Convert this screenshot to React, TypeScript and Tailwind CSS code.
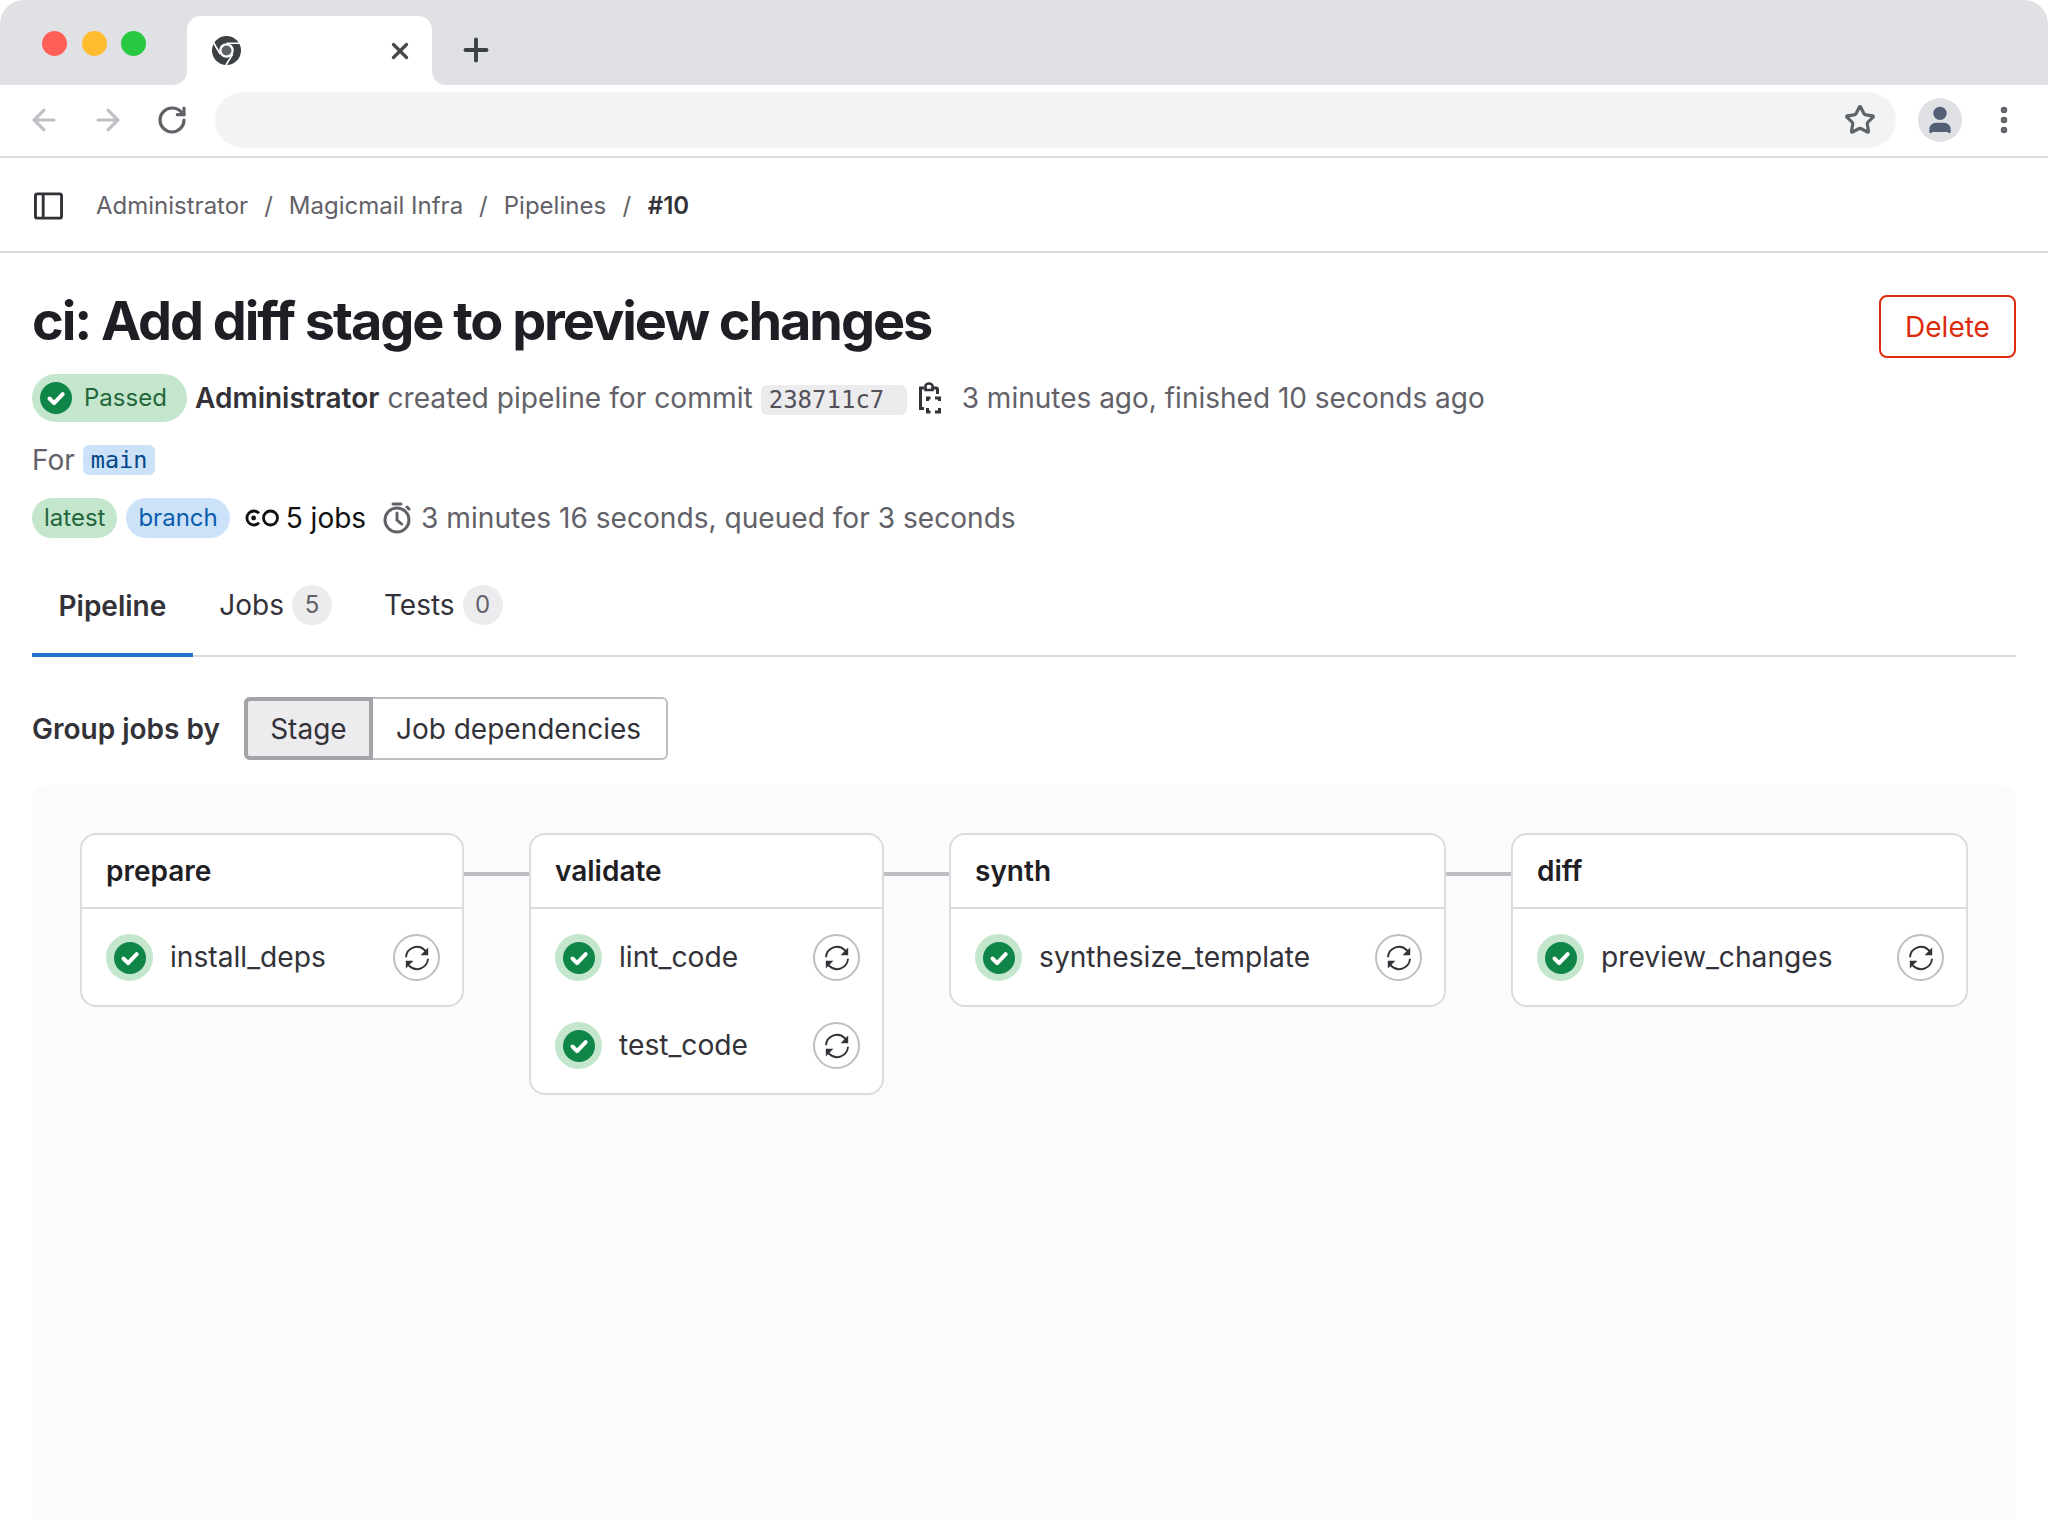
import { ArrowLeft, ArrowRight, MoreVertical, Plus, RotateCw, Star, User, X } from 'lucide-react';

const stages = [
  { name: 'prepare', width: 'w-[384px]', jobs: ['install_deps'] },
  { name: 'validate', width: 'w-[355px]', jobs: ['lint_code', 'test_code'] },
  { name: 'synth', width: 'w-[497px]', jobs: ['synthesize_template'] },
  { name: 'diff', width: 'w-[457px]', jobs: ['preview_changes'] },
];

const StatusCheck = ({ className }: { className: string }) => (
  <svg viewBox="0 0 32 32" className={className}>
    <circle cx="16" cy="16" r="16" fill="#108548" />
    <path d="M9.5 16.5l4.6 4.6 8.6-9" fill="none" stroke="#fff" strokeWidth="4" strokeLinecap="round" strokeLinejoin="round" />
  </svg>
);

const RetryIcon = () => (
  <svg viewBox="0 0 26 26" className="h-[26px] w-[26px]" fill="none" stroke="#333238" strokeWidth="1.9">
    <path d="M2 12.2A11 11 0 0 1 20.6 5l2 2.2" />
    <path d="M24 13.8A11 11 0 0 1 5.4 21l-2-2.2" />
    <path d="M24.2 2.6v7.6h-7.6z" fill="#333238" stroke="none" />
    <path d="M1.8 23.4v-7.6h7.6z" fill="#333238" stroke="none" />
  </svg>
);

const ChromeIcon = () => (
  <svg viewBox="0 0 28 28" className="h-[29px] w-[29px]">
    <circle cx="14" cy="14" r="14" fill="#3c4043" />
    <circle cx="14" cy="14" r="7" fill="#fff" />
    <circle cx="14" cy="14" r="4.8" fill="#5f6368" />
    <path d="M14 7h13M8 17.5L1.5 6.5M20 17.5L13.5 28" stroke="#fff" strokeWidth="1.6" />
  </svg>
);

const Job = ({ name }: { name: string }) => (
  <div className="flex h-[47px] items-center">
    <div className="flex h-[47px] w-[47px] shrink-0 items-center justify-center rounded-full bg-[#c3e6cd]">
      <StatusCheck className="h-[32px] w-[32px]" />
    </div>
    <span className="ml-[17px] flex-1 text-[28.2px] text-[#333238]">{name}</span>
    <div className="flex h-[47px] w-[47px] shrink-0 items-center justify-center rounded-full border-2 border-[#bfbfc3] bg-white">
      <RetryIcon />
    </div>
  </div>
);

export default function App() {
  return (
    <div className="flex h-[1520px] w-[2048px] flex-col overflow-hidden bg-white font-['Inter',sans-serif]">
      {/* Browser tab strip */}
      <div className="flex h-[85px] shrink-0 items-end rounded-t-[24px] bg-[#dfe1e5]">
        <div className="mb-[29px] ml-[42px] flex w-[104px] items-center justify-between self-end">
          <span className="h-[25px] w-[25px] rounded-full bg-[#ff5f57]" />
          <span className="h-[25px] w-[25px] rounded-full bg-[#febc2e]" />
          <span className="h-[25px] w-[25px] rounded-full bg-[#28c840]" />
        </div>
        <div className="relative ml-[41px] flex h-[69px] w-[245px] items-center justify-between rounded-t-[14px] bg-white pl-[25px] pr-[19px]">
          <ChromeIcon />
          <X className="h-[26px] w-[26px] text-[#45474b]" strokeWidth={3} />
          <div className="absolute -left-[14px] bottom-0 h-[14px] w-[14px] bg-white">
            <div className="h-full w-full rounded-br-[14px] bg-[#dfe1e5]" />
          </div>
          <div className="absolute -right-[14px] bottom-0 h-[14px] w-[14px] bg-white">
            <div className="h-full w-full rounded-bl-[14px] bg-[#dfe1e5]" />
          </div>
        </div>
        <Plus className="mb-[17px] ml-[26px] h-[36px] w-[36px] text-[#3c4043]" strokeWidth={2.6} />
      </div>

      {/* Browser toolbar */}
      <div className="flex h-[73px] shrink-0 items-center border-b-2 border-[#dcdcde] pb-[2px]">
        <ArrowLeft className="ml-[27px] h-[34px] w-[34px] text-[#bdc1c6]" strokeWidth={2.2} />
        <ArrowRight className="ml-[30px] h-[34px] w-[34px] text-[#bdc1c6]" strokeWidth={2.2} />
        <RotateCw className="ml-[31px] h-[32px] w-[32px] text-[#5f6368]" strokeWidth={2.4} />
        <div className="ml-[27px] flex h-[56px] w-[1681px] items-center justify-end rounded-full bg-[#f1f3f4] pr-[20px]">
          <Star className="h-[32px] w-[32px] text-[#5f6368]" strokeWidth={2.4} />
        </div>
        <div className="ml-[22px] flex h-[44px] w-[44px] items-center justify-center rounded-full bg-[#dfe1e5]">
          <User className="h-[32px] w-[32px] fill-[#535f75] text-[#535f75]" />
        </div>
        <MoreVertical className="ml-[25px] h-[34px] w-[34px] text-[#5f6368]" strokeWidth={2.6} />
      </div>

      {/* Breadcrumbs */}
      <div className="flex h-[95px] shrink-0 items-center border-b-2 border-[#dcdcde] pl-[34px] pt-[2px] text-[24px] text-[#626168]">
        <svg viewBox="0 0 30 28" className="h-[28px] w-[29px]" fill="none" stroke="#333238" strokeWidth="3">
          <rect x="1.5" y="1.5" width="27" height="25" rx="2" />
          <path d="M9.5 1.5v25" />
        </svg>
        <span className="ml-[33px]">Administrator</span>
        <span className="mx-[16px]">/</span>
        <span>Magicmail Infra</span>
        <span className="mx-[16px]">/</span>
        <span>Pipelines</span>
        <span className="mx-[16.5px]">/</span>
        <span className="font-semibold text-[#333238]">#10</span>
      </div>

      <div className="flex min-h-0 flex-1 flex-col px-[32px]">
        {/* Title */}
        <div className="flex h-[106px] shrink-0 items-start justify-between">
          <h1 className="mt-[34px] text-[54px] font-bold leading-[68px] tracking-[-2.05px] text-[#1f1e24]">
            ci: Add diff stage to preview changes
          </h1>
          <button className="mt-[42px] h-[63px] w-[137px] rounded-[8px] border-2 border-[#dd2b0e] text-[28px] text-[#dd2b0e]">
            Delete
          </button>
        </div>

        {/* Pipeline meta */}
        <div className="mt-[15px] flex h-[48px] shrink-0 items-center text-[28px] text-[#626168]">
          <span className="flex h-[48px] w-[155px] items-center rounded-full bg-[#c3e6cd] pl-[8px] text-[24px] text-[#24663b]">
            <StatusCheck className="h-[32px] w-[32px]" />
            <span className="ml-[12px]">Passed</span>
          </span>
          <span className="ml-[8px] font-semibold text-[#333238]">Administrator</span>
          <span className="ml-[8px] text-[28.2px]">created pipeline for commit</span>
          <code className="ml-[8px] mt-[3px] h-[30px] w-[146px] rounded-[6px] bg-[#ececef] pl-[8px] font-['DejaVu_Sans_Mono',monospace] text-[24px] leading-[30px] text-[#535158]">
            238711c7
          </code>
          <svg viewBox="0 0 24 32" className="ml-[11px] h-[32px] w-[24px]" fill="none" stroke="#333238" strokeWidth="3">
            <path d="M6 6H2.5v20.5H6" />
            <path d="M7.5 8V4a3.5 2.5 0 0 1 7 0v4z" strokeWidth="2.6" />
            <path d="M15 6h3a1.5 1.5 0 0 1 1.5 1.5V12" />
            <path d="M9.5 19v-3h3M17 16h4.5v3M21.5 26v4H17M12.5 30h-3v-4" />
          </svg>
          <span className="ml-[20px]">3 minutes ago, finished 10 seconds ago</span>
        </div>
        <div className="mt-[22px] flex h-[32px] shrink-0 items-center text-[28px] text-[#626168]">
          <span>For</span>
          <code className="ml-[8px] h-[30px] rounded-[6px] bg-[#cbe2f9] px-[8px] font-['DejaVu_Sans_Mono',monospace] text-[23.5px] leading-[30px] text-[#064787]">
            main
          </code>
        </div>
        <div className="mt-[22px] flex h-[40px] shrink-0 items-center text-[28px] text-[#626168]">
          <span className="rounded-full bg-[#c3e6cd] px-[12px] text-[24px] leading-[40px] text-[#24663b]">latest</span>
          <span className="ml-[9px] rounded-full bg-[#cbe2f9] px-[12px] text-[24px] leading-[40px] text-[#0b5cad]">branch</span>
          <svg viewBox="0 0 34 18" className="ml-[15px] h-[18px] w-[34px]" fill="none" stroke="#111" strokeWidth="2.8">
            <circle cx="25.5" cy="9" r="7" />
            <path d="M14 4.2A7 7 0 1 0 14 13.8" />
            <circle cx="8.6" cy="9" r="2.4" fill="#111" stroke="none" />
          </svg>
          <span className="ml-[7px] text-[#111]">5 jobs</span>
          <svg viewBox="0 0 28 32" className="ml-[17px] h-[32px] w-[28px]" fill="none" stroke="#626168" strokeWidth="3">
            <circle cx="14" cy="18" r="12" />
            <path d="M14 11v7l4.5 4M10 2h8M24 5l2 2" strokeLinecap="round" />
          </svg>
          <span className="ml-[10px] text-[28.1px]">3 minutes 16 seconds, queued for 3 seconds</span>
        </div>

        {/* Tabs */}
        <div className="mt-[16px] flex h-[103px] shrink-0 border-b-2 border-[#dcdcde] text-[28px] text-[#333238]">
          <div className="-mb-[2px] flex h-[103px] items-center border-y-4 border-t-transparent border-b-[#1f75cb] px-[26.5px] font-semibold">Pipeline</div>
          <div className="flex items-center pl-[26.5px] pr-[25px]">
            Jobs
            <span className="ml-[8px] flex h-[40px] w-[40px] items-center justify-center rounded-full bg-[#ececef] text-[24px] text-[#626168]">5</span>
          </div>
          <div className="flex items-center pl-[27px]">
            Tests
            <span className="ml-[8px] flex h-[40px] w-[40px] items-center justify-center rounded-full bg-[#ececef] text-[24px] text-[#626168]">0</span>
          </div>
        </div>

        {/* Group jobs by */}
        <div className="mt-[40px] flex h-[63px] shrink-0 items-center text-[28px] text-[#333238]">
          <span className="font-semibold">Group jobs by</span>
          <div className="ml-[24px] flex h-[63px] rounded-[6px] border-2 border-[#bfbfc3]">
            <div className="-m-[2px] flex w-[129px] items-center justify-center rounded-l-[6px] border-[4px] border-[#a4a3a8] bg-[#ececef]">Stage</div>
            <div className="flex items-center pl-[25px] pr-[25px]">Job dependencies</div>
          </div>
        </div>

        {/* Graph */}
        <div className="mt-[25px] flex min-h-0 flex-1 items-start rounded-t-[16px] bg-[#fbfafd] pl-[48px] pr-[48px] pt-[48px]">
          {stages.map((stage, index) => (
            <div key={stage.name} className="flex items-start">
              {index > 0 && <div className="mt-[39px] h-[4px] w-[65px] bg-[#bfbfc3]" />}
              <div className={`${stage.width} rounded-[16px] border-2 border-[#dcdcde] bg-white`}>
                <div className="flex h-[74px] items-center border-b-2 border-[#dcdcde] pl-[24px] text-[28px] font-semibold text-[#1f1e24]">
                  {stage.name}
                </div>
                <div className="flex flex-col gap-[41px] pb-[24px] pl-[24px] pr-[22px] pt-[25px]">
                  {stage.jobs.map((job) => (
                    <Job key={job} name={job} />
                  ))}
                </div>
              </div>
            </div>
          ))}
        </div>
      </div>
    </div>
  );
}
